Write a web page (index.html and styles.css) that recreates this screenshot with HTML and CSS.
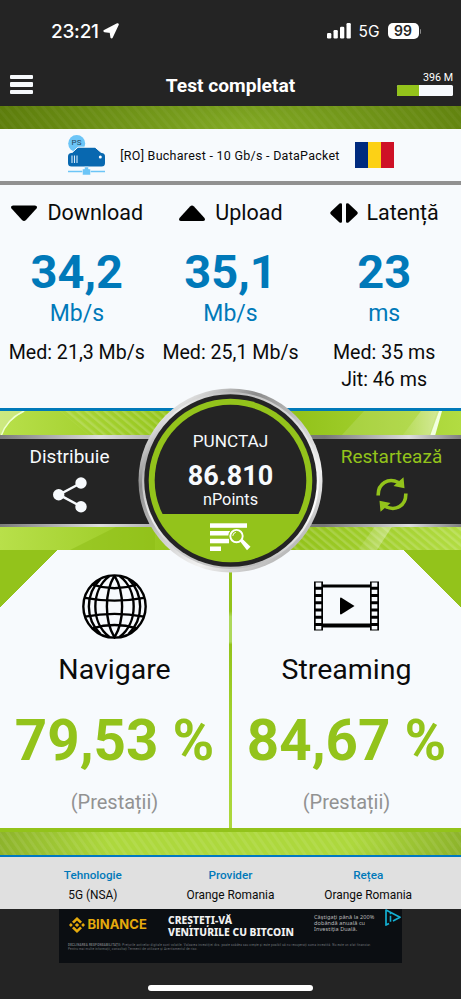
FILE: index.html
```html
<!DOCTYPE html>
<html lang="ro">
<head>
<meta charset="utf-8">
<meta name="viewport" content="width=device-width">
<title>Test completat</title>
<link rel="stylesheet" href="styles.css">
</head>
<body>
<div class="app">
  <header class="header">
    <div class="status">
      <div class="status-left">
        <span class="clock">23:21</span>
        <svg class="loc" viewBox="0 0 16 16"><path d="M14.600 1.400 8.600 14.200 7.800 8.800 1.600 8z" fill="#fff" stroke="#fff" stroke-width="2.400" stroke-linejoin="round"/></svg>
      </div>
      <div class="status-right">
        <svg class="signal" viewBox="0 0 24 16" fill="#fff"><rect x="0" y="10" width="4.300" height="5.500" rx="1.200"/><rect x="6.500" y="7" width="4.300" height="8.500" rx="1.200"/><rect x="13" y="3.800" width="4.300" height="11.700" rx="1.200"/><rect x="19.500" y="0" width="4.300" height="15.500" rx="1.200"/></svg>
        <span class="net">5G</span>
        <span class="battery">99</span><i class="nub"></i>
      </div>
    </div>
    <div class="titlebar">
      <div class="menu"><i></i><i></i><i></i></div>
      <h1>Test completat</h1>
      <div class="quota"><span>396 M</span><div class="bar"><i></i></div></div>
    </div>
  </header>

  <div class="strip strip-top"></div>

  <section class="server">
    <svg class="server-icon" viewBox="0 0 37 40">
      <circle cx="8.700" cy="8.500" r="8.500" fill="#6cc5f7"/>
      <path d="M2.500 19 10 12.200h17L35 19z" fill="#0868b0" stroke="#f7fafd" stroke-width="1"/>
      <rect x="0" y="18" width="37" height="13.500" rx="3.500" fill="#0868b0"/>
      <path d="M4 20.500v7.500M6.500 20.500v7.500M9 20.500v7.500" stroke="#d5eafa" stroke-width="1.100"/>
      <circle cx="32.300" cy="22" r="1.500" fill="#fff"/>
      <path d="M0 36.500h37" stroke="#6cc5f7" stroke-width="1.300"/>
      <path d="M14.500 34h2v-2h4v2h2v6h-8z" fill="#6cc5f7" stroke="#f7fafd" stroke-width=".5"/>
      <text x="3.600" y="10" class="ps">PS</text>
    </svg>
    <span class="server-name">[RO] Bucharest - 10 Gb/s - DataPacket</span>
    <div class="flag"><i></i><i></i><i></i></div>
  </section>

  <section class="metrics">
    <div class="metric">
      <h2><svg viewBox="0 0 28 20"><path d="M3 2.500h22q3 .5 1.500 3L16 17q-2 2-4 0L1.500 5.500q-1.500-2.500 1.500-3z"/></svg>Download</h2>
      <strong>34,2</strong><span class="unit">Mb/s</span>
      <span class="sub">Med: 21,3 Mb/s</span>
    </div>
    <div class="metric">
      <h2><svg viewBox="0 0 28 20"><path d="M3 18h22q3-.5 1.500-3L16 3.500q-2-2-4 0L1.500 15q-1.500 2.500 1.500 3z"/></svg>Upload</h2>
      <strong>35,1</strong><span class="unit">Mb/s</span>
      <span class="sub">Med: 25,1 Mb/s</span>
    </div>
    <div class="metric">
      <h2><svg viewBox="0 0 28 20"><path d="M9.500.5q2.500-1 2.500 1v17q0 2-2.500 1L1 11.500q-1.500-1.500 0-3zM18.500.5q-2.500-1-2.500 1v17q0 2 2.500 1L27 11.500q1.500-1.500 0-3z"/></svg>Latență</h2>
      <strong>23</strong><span class="unit">ms</span>
      <span class="sub">Med: 35 ms</span>
      <span class="sub">Jit: 46 ms</span>
    </div>
  </section>

  <section class="actions">
    <svg class="action-bg" viewBox="0 0 461 139" preserveAspectRatio="none">
      <defs>
        <linearGradient id="bg" x1="0" x2="1"><stop offset="0" stop-color="#b8e04a"/><stop offset=".35" stop-color="#97c71f"/><stop offset=".65" stop-color="#93c31b"/><stop offset="1" stop-color="#b2dc42"/></linearGradient>
        <pattern id="hatch" width="6" height="6" patternUnits="userSpaceOnUse" patternTransform="rotate(-50)"><path d="M0 0v6" stroke="#fff" stroke-opacity=".16" stroke-width="5"/></pattern>
        <linearGradient id="ray" x1="0" x2="1"><stop offset="0" stop-color="#fff" stop-opacity=".05"/><stop offset="1" stop-color="#fff" stop-opacity=".4"/></linearGradient>
      </defs>
      <rect width="461" height="139" fill="url(#bg)"/>
      <path d="M60 0h120v25H90z" fill="url(#hatch)"/>
      <path d="M290 114h171v25H290z" fill="url(#hatch)"/>
      <path d="M0 0h26Q9 7 0 25z" fill="#fff" fill-opacity=".3"/>
      <path d="M1 25Q7 8 24 0" fill="none" stroke="#efffd0" stroke-width="1.500"/>
      <path d="M341 25 364 0h73l-8 25z" fill="#fff" fill-opacity=".12"/>
      <path d="M402 25 421 0h18l-8 25z" fill="url(#ray)"/>
      <path d="m430 25 9-25h3l-7 25z" fill="#f3ffe0"/>
      <path d="m358 139 18-25h17l-16 25z" fill="url(#ray)"/>
      <path d="m70 139 50-25h35v25z" fill="#8cbc13" fill-opacity=".5"/>
    </svg>
    <div class="band">
      <div class="action">
        <span>Distribuie</span>
        <svg width="34" height="36" viewBox="0 0 34 36" fill="#f7fafd"><path d="M28 6 6 17.700 28 29.500" fill="none" stroke="#f7fafd" stroke-width="2.500"/><circle cx="28" cy="6" r="5.700"/><circle cx="5.700" cy="17.700" r="5.700"/><circle cx="28" cy="29.800" r="5.700"/></svg>
      </div>
      <div class="action restart">
        <span>Restartează</span>
        <svg width="32" height="36" viewBox="0 0 32 36"><g fill="none" stroke="#93c31b" stroke-width="3.600"><path d="M2.200 18.500C1.800 6 12.500.5 22.500 5.500"/><path d="M29.800 16.500C30.200 29 19.500 34.500 9.500 29.500"/></g><path d="M27.500.2 28.500 11.300 17.500 9zM4.500 34.800 3.500 23.700l11 2.300z" fill="#93c31b"/></svg>
      </div>
    </div>
    <div class="gauge">
      <svg viewBox="0 0 185 185">
        <defs>
          <linearGradient id="metal" x1=".1" y1="0" x2=".9" y2="1"><stop offset="0" stop-color="#eee"/><stop offset=".12" stop-color="#ddd"/><stop offset=".28" stop-color="#8b8b8b"/><stop offset=".5" stop-color="#ccc"/><stop offset=".7" stop-color="#f2f2f2"/><stop offset="1" stop-color="#999"/></linearGradient>
          <clipPath id="lower"><rect y="126" width="185" height="59"/></clipPath>
        </defs>
        <circle cx="92.500" cy="92.500" r="92" fill="url(#metal)"/>
      </svg>
      <div class="rim"></div>
      <svg viewBox="0 0 185 185">
        <circle cx="92.500" cy="92.500" r="86.300" fill="#242424"/>
        <circle cx="92.500" cy="92.500" r="81.800" fill="#93c31b"/>
        <circle cx="92.500" cy="92.500" r="75.800" fill="#242424"/>
        <circle cx="92.500" cy="92.500" r="80" fill="#93c31b" clip-path="url(#lower)"/>
        <g transform="translate(72 135.300)" fill="#fff"><rect width="37" height="4.500"/><rect y="7.700" width="20" height="4.500"/><rect y="15.500" width="19" height="4.500"/><rect y="23.200" width="11" height="4.500"/>
          <circle cx="26.500" cy="12.800" r="8.200" fill="#93c31b"/><circle cx="26.500" cy="12.800" r="6.200" fill="none" stroke="#fff" stroke-width="1.900"/><path d="M22.800 12.600a3.700 3.700 0 0 1 3-3.500" fill="none" stroke="#fff" stroke-width="1"/><path d="m30 18 2.500-2.300 8 7.800-3.500 3.500z"/></g>
      </svg>
      <div class="score"><span>PUNCTAJ</span><b>86.810</b><small>nPoints</small></div>
    </div>
  </section>

  <section class="results">
    <div class="result left">
      <svg class="globe" viewBox="0 0 64 64" fill="none" stroke="#000" stroke-width="2.350"><circle cx="32" cy="32" r="30.700"/><path d="M32 1.500C22 18 22 46 32 62.500C42 46 42 18 32 1.500"/><path d="M27 2C8.500 16 8.500 48 27 62M37 2c18.500 14 18.500 46 0 60"/><path d="M18 5C3 20 3 44 18 59M46 5c15 15 15 39 0 54"/><path d="M10 10.500Q32 17.500 54 10.500M3 23.500Q32 29 61 23.500M3 42Q32 36.500 61 42M10 53.500Q32 47 54 53.500"/></svg>
      <h3>Navigare</h3><strong>79,53 %</strong><small>(Prestații)</small>
    </div>
    <div class="divider"></div>
    <div class="result right">
      <svg class="film" viewBox="0 0 65 50"><path fill-rule="evenodd" d="M0 .5h9v3h47v-3h9v49h-9v-3H9v3H0zM9 6.500v36h47v-36z"/><g stroke="#f7fafd" stroke-width="5.600" stroke-dasharray="4.300 2.950"><path d="M4.500 1.500v47M60.500 1.500v47"/></g><path d="M27 16.500 40.500 25 27 33.500q-1 0-1-1v-15q0-1 1-1z"/></svg>
      <h3>Streaming</h3><strong>84,67 %</strong><small>(Prestații)</small>
    </div>
  </section>

  <div class="strip strip-bottom"></div>

  <section class="network">
    <div><b>Tehnologie</b><span>5G (NSA)</span></div>
    <div><b>Provider</b><span>Orange Romania</span></div>
    <div><b>Rețea</b><span>Orange Romania</span></div>
  </section>

  <footer class="foot">
    <div class="ad">
      <div class="ad-main">
        <div class="brand"><svg viewBox="0 0 16 16" fill="#e5aa0c"><path d="m8 0 5 4.800-1.900 1.800L8 3.600l-3.100 3L3 4.800zM8 16l5-4.800-1.900-1.800-3.100 3-3.100-3L3 11.200zM8 5.900 10.200 8 8 10.100 5.800 8zM1.900 6.100 3.800 8 1.900 9.900 0 8zM14.100 6.100 16 8l-1.900 1.900L12.200 8z"/></svg><span>BINANCE</span></div>
        <div class="slogan"><span>CREȘTEȚI-VĂ</span><span>VENITURILE CU BITCOIN</span></div>
        <div class="offer"><span>Câștigați până la 200%</span><span>dobândă anuală cu</span><span>Investiția Duală.</span></div>
        <svg class="adchoice" viewBox="0 0 16 17" fill="none" stroke="#14afd2" stroke-width="1.700" stroke-linejoin="round"><path d="M4 14.500 1 16V1l14 7.300L8 12"/><path d="M5.500 3.800v1.400M5.500 6.800v6" stroke-width="1.600"/></svg>
      </div>
      <p><b>DECLINAREA RESPONSABILITĂȚII:</b> Prețurile activelor digitale sunt volatile. Valoarea investiției dvs. poate scădea sau crește și este posibil să nu recuperați suma investită. Nu este un sfat financiar.<br>Pentru mai multe informații, consultați Termenii de utilizare și Avertismentul de risc.</p>
    </div>
    <div class="home"></div>
  </footer>
</div>
</body>
</html>
```
FILE: styles.css
```css
* { box-sizing: border-box; }
body { margin: 0; background: #242424; font-family: Roboto, "Liberation Sans", sans-serif; color: #0b0b0b; }
h1, h2, h3, p { margin: 0; font-weight: 400; }
svg { display: block; flex: none; }
.app { width: 461px; height: 999px; overflow: hidden; display: flex; flex-direction: column; }
.app > * { flex: none; }

.header { height: 106px; background: #242424; color: #fff; }
.status { height: 62px; padding: 22px 40px 0 51px; display: flex; justify-content: space-between; align-items: flex-start; font-family: Inter, sans-serif; }
.status-left, .status-right { display: flex; align-items: center; height: 18px; }
.clock { font-size: 19px; font-weight: 500; letter-spacing: -.25px; }
.loc { width: 16px; height: 16px; margin-left: 4px; }
.signal { width: 24px; height: 16px; }
.net { font-size: 15.500px; margin-left: 8px; }
.battery { width: 31px; height: 16px; margin-left: 8px; border-radius: 5px; background: #fff; color: #242424; font-size: 14px; font-weight: 600; line-height: 16px; text-align: center; }
.nub { width: 1.500px; height: 5px; margin-left: 1px; background: #8a8a8a; border-radius: 0 1px 1px 0; }
.titlebar { height: 44px; padding: 0 8px 0 10px; display: grid; grid-template-columns: 56px 1fr 56px; }
.menu { padding-top: 13px; display: flex; flex-direction: column; gap: 3.300px; }
.menu i { width: 23px; height: 4.200px; background: #f7fafd; border-radius: 1px; }
.titlebar h1 { font-size: 19.200px; font-weight: 700; line-height: 47px; text-align: center; margin-left: -2px; }
.quota { padding-top: 9px; text-align: right; font-size: 10.700px; line-height: 13px; }
.bar { height: 11px; margin-top: 1px; background: #f7fafd; border-radius: 1.500px; overflow: hidden; }
.bar i { display: block; width: 22px; height: 100%; background: #93c31b; }

.strip-top { height: 23px; background: repeating-linear-gradient(50deg, transparent 0 3px, rgba(255,255,255,.04) 4px 6px, transparent 7px), radial-gradient(ellipse 260px 80px at 54% 100%, #82aa24, #5c7c0b); }
.server { height: 56px; padding-left: 1px; background: #f7fafd; border-bottom: 4px solid #919191; display: flex; align-items: center; justify-content: center; gap: 15px; }
.server-icon { width: 37px; height: 40px; }
.ps { font: 8px Roboto, sans-serif; fill: #26475c; }
.server-name { font-size: 12.500px; line-height: 16px; letter-spacing: .26px; padding-top: 2px; }
.flag { width: 39px; height: 26px; display: grid; grid-template-columns: 1fr 1fr 1fr; }
.flag i:nth-child(1) { background: #002b7f; }
.flag i:nth-child(2) { background: #fcd116; }
.flag i:nth-child(3) { background: #ce1126; }

.metrics { height: 226px; padding-top: 14px; background: #f7fafd; border-bottom: 3px solid #0079b9; display: grid; grid-template-columns: repeat(3, 1fr); }
.metric { display: flex; flex-direction: column; align-items: center; white-space: nowrap; }
.metric h2 { display: flex; align-items: center; gap: 9px; font-size: 21.500px; line-height: 28px; }
.metric h2 svg { width: 28px; height: 20px; }
.metric strong { margin-top: 17px; font-size: 47px; line-height: 56px; font-weight: 700; color: #0079b9; }
.unit { font-size: 23px; line-height: 28px; margin-bottom: 12px; color: #0079b9; }
.sub { font-size: 19.600px; line-height: 26.500px; }

.actions { position: relative; height: 139px; padding-top: 24px; }
.action-bg { position: absolute; inset: 0; width: 461px; height: 139px; }
.band { position: relative; height: 92px; border: solid; border-width: 4px 0 3px; border-image: linear-gradient(90deg, #777, #ddd 22%, #888 45%, #777 70%, #ddd 88%, #777) 4; background: #242424; display: flex; justify-content: space-between; }
.action { width: 139px; padding-top: 6px; display: flex; flex-direction: column; align-items: center; gap: 8px; font-size: 19px; line-height: 24px; color: #f7fafd; }
.restart { color: #93c31b; }
.gauge { position: absolute; z-index: 2; left: 138px; top: -23px; width: 185px; height: 185px; }
.gauge svg { position: absolute; inset: 0; width: 185px; height: 185px; }
.rim { position: absolute; inset: 4px; border-radius: 50%; background: conic-gradient(#bbb, #eee 20%, #fff 30%, #bbb 45%, #ccc 60%, #eee 68%, #aaa 78%, #eee 90%, #bbb); }
.score { position: relative; padding-top: 42px; display: flex; flex-direction: column; align-items: center; color: #f7fafd; }
.score span { font-size: 17.200px; line-height: 22px; }
.score b { font-size: 27px; line-height: 30px; margin-top: 9px; }
.score small { font-size: 16.300px; line-height: 18px; }

.results { height: 278px; display: grid; grid-template-columns: 229px 3px 229px; background: #f7fafd; }
.result { display: flex; flex-direction: column; align-items: center; white-space: nowrap; }
.left { background: linear-gradient(135deg, #93c31b 40.300px, transparent 40.800px); }
.right { background: linear-gradient(225deg, #93c31b 40.300px, transparent 40.800px); }
.divider { background: linear-gradient(#93c31b 22%, #add85b 24% 33%, #93c31b 34%, #a1d12e 60%, #add83d); }
.globe { width: 65px; height: 65px; margin: 24px 0 13px; }
.film { width: 65px; height: 50px; margin: 31px 0 21px; }
.result h3 { font-size: 28.500px; line-height: 36px; }
.result strong { font-size: 56.500px; line-height: 66px; margin-top: 20px; color: #93c31b; }
.result small { font-size: 20px; line-height: 24px; margin-top: 16px; color: #929292; }

.strip-bottom { height: 27px; border-top: 4px solid #93c31b; background: repeating-linear-gradient(55deg, transparent 0 3px, rgba(255,255,255,.08) 4px 6px, transparent 7px), radial-gradient(ellipse 270px 75px at 50% 40%, #add83d 45%, #82a725); }
.network { height: 54px; padding: 8px 24px 0; border-top: 2px solid #0079c2; background: #e0e0e0; display: grid; grid-template-columns: repeat(3, 1fr); text-align: center; }
.network b, .network span { display: block; font-size: 11.900px; line-height: 20px; }
.network b { font-weight: 500; font-size: 11.700px; color: #0079b9; }

.foot { height: 90px; display: flex; flex-direction: column; align-items: center; }
.ad { width: 343px; height: 54px; background: #0b0e12; color: #f1f1f1; }
.ad-main { height: 33px; display: grid; grid-template-columns: 109px 146px 71px 16px; font-family: "Noto Sans", sans-serif; white-space: nowrap; }
.ad-main > div > span { display: block; }
.brand { display: flex; align-items: flex-start; padding: 8px 0 0 10px; gap: 2.500px; color: #e5aa0c; }
.brand svg { width: 16px; height: 16px; }
.brand span { font: 700 13px/15px Inter, sans-serif; }
.slogan { padding-top: 6px; font-size: 10.300px; line-height: 11.600px; font-weight: 800; }
.offer { padding-top: 5px; font-size: 5.500px; line-height: 6px; letter-spacing: .1px; color: #bbb; }
.adchoice { width: 16px; height: 17px; }
.ad p { padding: 1px 9px; font-size: 3px; line-height: 4px; letter-spacing: .21px; color: #73777c; white-space: nowrap; }
.home { width: 165px; height: 6px; margin-top: 22px; border-radius: 3px; background: #fff; }
```
